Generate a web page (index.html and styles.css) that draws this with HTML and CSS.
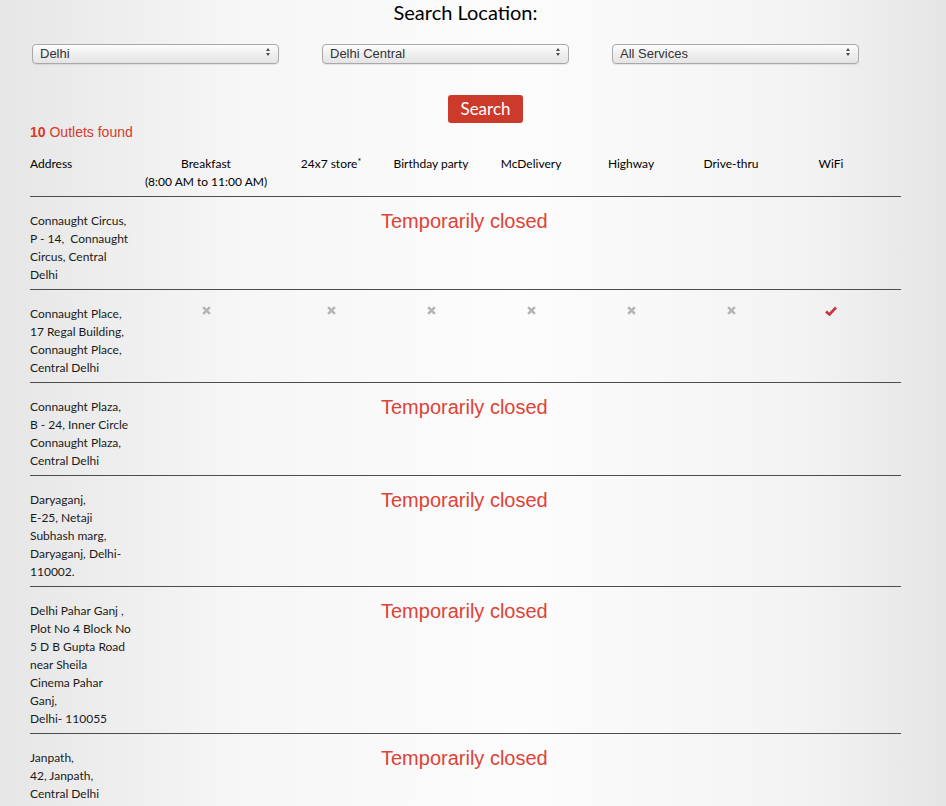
FILE: index.html
```html
<!DOCTYPE html>
<html lang="en">
<head>
    <meta charset="UTF-8">
    <meta name="viewport" content="width=device-width, initial-scale=1.0">
    <title>Locate Outlets</title>
    <link rel="stylesheet" href="styles.css">
</head>
<body>
    <div class="locator">
        <h1>Search Location:</h1>

        <div class="filters">
            <span class="select-wrap">
                <select><option>Delhi</option></select>
            </span>
            <span class="select-wrap">
                <select><option>Delhi Central</option></select>
            </span>
            <span class="select-wrap">
                <select><option>All Services</option></select>
            </span>
        </div>

        <div class="search-row">
            <button class="search-btn">Search</button>
        </div>

        <p class="count"><strong>10</strong> Outlets found</p>

        <div class="outlets">
            <div class="row head">
                <div class="addr">Address</div>
                <div>Breakfast<br>(8:00 AM to 11:00 AM)</div>
                <div>24x7 store<sup>*</sup></div>
                <div>Birthday party</div>
                <div>McDelivery</div>
                <div>Highway</div>
                <div>Drive-thru</div>
                <div>WiFi</div>
            </div>

            <div class="row">
                <div class="addr">Connaught Circus,<br>P - 14,&nbsp; Connaught<br>Circus, Central<br>Delhi</div>
                <div class="closed">Temporarily closed</div>
            </div>

            <div class="row">
                <div class="addr">Connaught Place,<br>17 Regal Building,<br>Connaught Place,<br>Central Delhi</div>
                <div class="mark"><svg class="no" viewBox="0 0 8 8"><path d="M1 1L7 7M7 1L1 7"/></svg></div>
                <div class="mark"><svg class="no" viewBox="0 0 8 8"><path d="M1 1L7 7M7 1L1 7"/></svg></div>
                <div class="mark"><svg class="no" viewBox="0 0 8 8"><path d="M1 1L7 7M7 1L1 7"/></svg></div>
                <div class="mark"><svg class="no" viewBox="0 0 8 8"><path d="M1 1L7 7M7 1L1 7"/></svg></div>
                <div class="mark"><svg class="no" viewBox="0 0 8 8"><path d="M1 1L7 7M7 1L1 7"/></svg></div>
                <div class="mark"><svg class="no" viewBox="0 0 8 8"><path d="M1 1L7 7M7 1L1 7"/></svg></div>
                <div class="mark"><svg class="yes" viewBox="0 0 12 10"><path d="M1 5.5L4.5 8.5L11 1.5"/></svg></div>
            </div>

            <div class="row">
                <div class="addr">Connaught Plaza,<br>B - 24, Inner Circle<br>Connaught Plaza,<br>Central Delhi</div>
                <div class="closed">Temporarily closed</div>
            </div>

            <div class="row">
                <div class="addr">Daryaganj,<br>E-25, Netaji<br>Subhash marg,<br>Daryaganj, Delhi-<br>110002.</div>
                <div class="closed">Temporarily closed</div>
            </div>

            <div class="row">
                <div class="addr">Delhi Pahar Ganj ,<br>Plot No 4 Block No<br>5 D B Gupta Road<br>near Sheila<br>Cinema Pahar<br>Ganj,<br>Delhi- 110055</div>
                <div class="closed">Temporarily closed</div>
            </div>

            <div class="row">
                <div class="addr">Janpath,<br>42, Janpath,<br>Central Delhi</div>
                <div class="closed">Temporarily closed</div>
            </div>
        </div>
    </div>
</body>
</html>
```

FILE: styles.css
```css
body {
    margin: 0;
    min-height: 100vh;
    font-family: Lato, sans-serif;
    color: #111;
    background: linear-gradient(to right, #e6e6e6 0%, #f6f6f6 25%, #fcfcfc 55%, #f3f3f3 85%, #e5e5e5 100%);
}
.locator {
    width: 871px;
    padding-left: 30px;
}
h1 {
    margin: 0;
    font-size: 20px;
    font-weight: 400;
    line-height: 24px;
    text-align: center;
    color: #000;
}
.filters {
    display: grid;
    grid-template-columns: 290px 290px 290px;
    margin-top: 18px;
}
.select-wrap {
    position: relative;
    display: block;
    width: 247px;
    margin-left: 2px;
}
/* little up / down arrows of the native select */
.select-wrap::before,
.select-wrap::after {
    content: "";
    position: absolute;
    right: 9px;
    width: 0;
    height: 0;
    border-left: 2.5px solid transparent;
    border-right: 2.5px solid transparent;
    pointer-events: none;
}
.select-wrap::before {
    top: 6px;
    border-bottom: 3px solid #4a4a4a;
}
.select-wrap::after {
    top: 11px;
    border-top: 3px solid #4a4a4a;
}
select {
    appearance: none;
    -webkit-appearance: none;
    width: 100%;
    height: 20px;
    padding: 0 7px;
    font-family: "Liberation Sans", Arial, sans-serif;
    font-size: 13px;
    color: #333;
    border: 1px solid #a9a9a9;
    border-radius: 4px;
    background: linear-gradient(to bottom, #fdfdfd 0%, #efefef 50%, #e4e4e4 100%);
    box-shadow: 0 1px 1px rgba(0, 0, 0, 0.08);
}
.search-row {
    display: flex;
    justify-content: center;
    padding-left: 40px;
    margin-top: 31px;
}
.search-btn {
    width: 75px;
    height: 28px;
    border: none;
    border-radius: 3px;
    background: #cc3a2b;
    color: #fff;
    font-family: Lato, sans-serif;
    font-size: 17px;
    padding: 0;
}
.count {
    margin: 0;
    font-family: "Liberation Sans", Arial, sans-serif;
    font-size: 14px;
    line-height: 18px;
    color: #d53a2b;
}
.outlets {
    margin-top: 10px;
    font-size: 12px;
    line-height: 18px;
}
.row {
    display: grid;
    grid-template-columns: 101px 150px repeat(6, 100px) 20px;
    padding: 15px 0 5px;
    border-top: 1px solid #4d4d4d;
    color: #1a1a1a;
}
.row.head {
    border-top: none;
    padding: 4px 0 5px;
    text-align: center;
    color: #000;
}
.row.head .addr {
    text-align: left;
}
sup {
    font-size: 9px;
    line-height: 0;
    vertical-align: 3px;
}
.closed {
    grid-column: 2 / -1;
    padding-left: 250px;
    font-family: "Liberation Sans", Arial, sans-serif;
    font-size: 20px;
    color: #df4236;
}
.mark {
    display: flex;
    justify-content: center;
}
.mark svg {
    display: block;
    margin-top: 1px;
    fill: none;
}
.no {
    width: 9px;
    height: 9px;
    stroke: #b4b4b4;
    stroke-width: 2.2;
}
.yes {
    width: 12px;
    height: 10px;
    stroke: #c8353a;
    stroke-width: 2.6;
}
```
